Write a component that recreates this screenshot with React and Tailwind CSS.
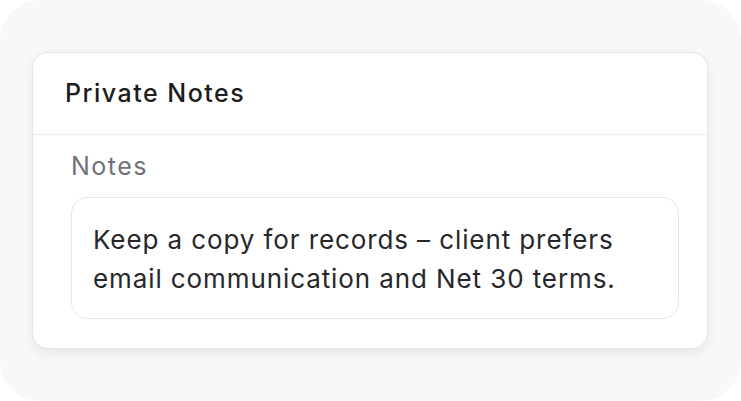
import React from "react";

export default function App() {
  return (
    <div className="w-[741px] h-[401px] bg-white" style={{ fontFamily: "Inter, 'Noto Sans', sans-serif" }}>
      <div className="w-full h-full rounded-[40px] bg-[#f7f8fa] pt-[52px] pl-[32px] pr-[33px]">
        <div className="h-[297px] rounded-2xl bg-white border border-[#e6e7ea] shadow-[0_5px_12px_rgba(0,0,0,0.07)] overflow-hidden">
          <div className="h-[82px] border-b border-[#ececee] pl-[32px] flex items-center">
            <h2 className="text-[25px] font-medium text-[#1c1d20] tracking-[1.5px]">Private Notes</h2>
          </div>
          <div className="pl-[38px] pr-[28px] pt-[16px]">
            <div className="text-[25px] text-[#6f7279] leading-[30px] tracking-[1.5px]">Notes</div>
            <div className="mt-[16px] h-[122px] rounded-2xl border border-[#e8e9ec] px-[21px] pt-[22px] text-[26px] leading-[39px] tracking-[0.9px] text-[#26272b]">
              Keep a copy for records – client prefers email communication and Net 30 terms.
            </div>
          </div>
        </div>
      </div>
    </div>
  );
}
